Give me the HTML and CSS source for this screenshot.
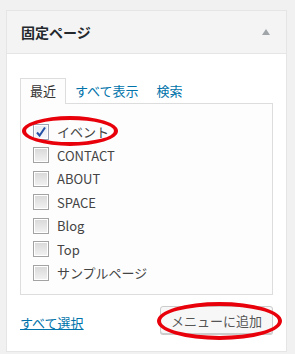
FILE: index.html
```html
<!DOCTYPE html>
<html lang="ja">
<head>
  <meta charset="UTF-8" />
  <title>固定ページ</title>
  <link rel="stylesheet" href="styles.css">
</head>
<body>
  <div class="postbox">
    <div class="hndle">
      <span>固定ページ</span>
      <span class="toggle"></span>
    </div>
    <div class="inside">
      <ul class="tabs">
        <li class="tab active">最近</li>
        <li class="tab"><a href="#">すべて表示</a></li>
        <li class="tab"><a href="#">検索</a></li>
      </ul>
      <div class="tabs-panel">
        <label class="item"><span class="cb checked"><svg width="12" height="12" viewBox="0 0 12 12"><path d="M2 6.5 L4.6 9.5 L10 1.5" fill="none" stroke="#2451a6" stroke-width="2"/></svg></span>イベント</label>
        <label class="item"><span class="cb"></span>CONTACT</label>
        <label class="item"><span class="cb"></span>ABOUT</label>
        <label class="item"><span class="cb"></span>SPACE</label>
        <label class="item"><span class="cb"></span>Blog</label>
        <label class="item"><span class="cb"></span>Top</label>
        <label class="item"><span class="cb"></span>サンプルページ</label>
      </div>
      <div class="actions">
        <a href="#" class="select-all">すべて選択</a>
        <button class="add-btn">メニューに追加</button>
      </div>
    </div>
  </div>

  <!-- 注釈の赤丸 -->
  <div class="mark mark-item"></div>
  <div class="mark mark-btn"></div>
</body>
</html>
```

FILE: styles.css
```css
body {
  margin: 0;
  padding: 10px 0 0 6px;
  background: #f1f1f1;
  font-family: "Noto Sans CJK JP", "Noto Sans", sans-serif;
  font-size: 13px;
  color: #444;
}

.postbox {
  width: 279px;
  background: #fff;
  border: 1px solid #e5e5e5;
}

.hndle {
  height: 42px;
  display: flex;
  align-items: center;
  justify-content: space-between;
  padding: 0 16px 0 14px;
  background: #f4f4f4;
  border-bottom: 1px solid #e5e5e5;
  font-size: 14px;
  font-weight: bold;
  color: #23282d;
}

.toggle {
  width: 0;
  height: 0;
  border-left: 4px solid transparent;
  border-right: 4px solid transparent;
  border-bottom: 6px solid #a0a5aa;
}

.inside {
  padding: 24px 13px 17px 13px;
}

.tabs {
  display: flex;
  align-items: flex-end;
  list-style: none;
  margin: 0;
  padding: 0;
  height: 25px;
}

.tab {
  padding: 0 9px;
  line-height: 24px;
}

.tab a {
  color: #0073aa;
  text-decoration: none;
}

.tab.active {
  background: #fdfdfd;
  border: 1px solid #ddd;
  border-bottom: none;
  height: 25px;
  color: #333;
  position: relative;
  top: 1px;
}

.tabs-panel {
  height: 174px;
  padding: 16px 0 0 12px;
  background: #fdfdfd;
  border: 1px solid #ddd;
}

.item {
  display: flex;
  align-items: center;
  height: 23.5px;
}

.cb {
  width: 14px;
  height: 14px;
  margin-right: 8px;
  border: 1px solid #a3a3a3;
  background: linear-gradient(#d8d8d8, #f2f2f2);
  box-shadow: inset 0 0 0 1px #fff;
  display: flex;
  align-items: center;
  justify-content: center;
}

.cb.checked {
  background: linear-gradient(#e6ebf4, #f6f8fb);
  border-color: #9aa3b5;
}

.actions {
  display: flex;
  justify-content: space-between;
  align-items: center;
  margin-top: 11px;
}

.select-all {
  color: #0073aa;
  text-decoration: underline;
  padding-top: 5px;
}

.add-btn {
  height: 28px;
  padding: 0 10px;
  font-family: inherit;
  font-size: 13px;
  color: #555;
  background: #f7f7f7;
  border: 1px solid #ccc;
  border-radius: 3px;
  box-shadow: 0 1px 0 #ccc;
}

.mark {
  position: absolute;
  border: 4px solid #e8000b;
  border-radius: 50%;
  box-sizing: border-box;
}

.mark-item {
  left: 22px;
  top: 116px;
  width: 96px;
  height: 30px;
}

.mark-btn {
  left: 157px;
  top: 302px;
  width: 125px;
  height: 38px;
}
```
